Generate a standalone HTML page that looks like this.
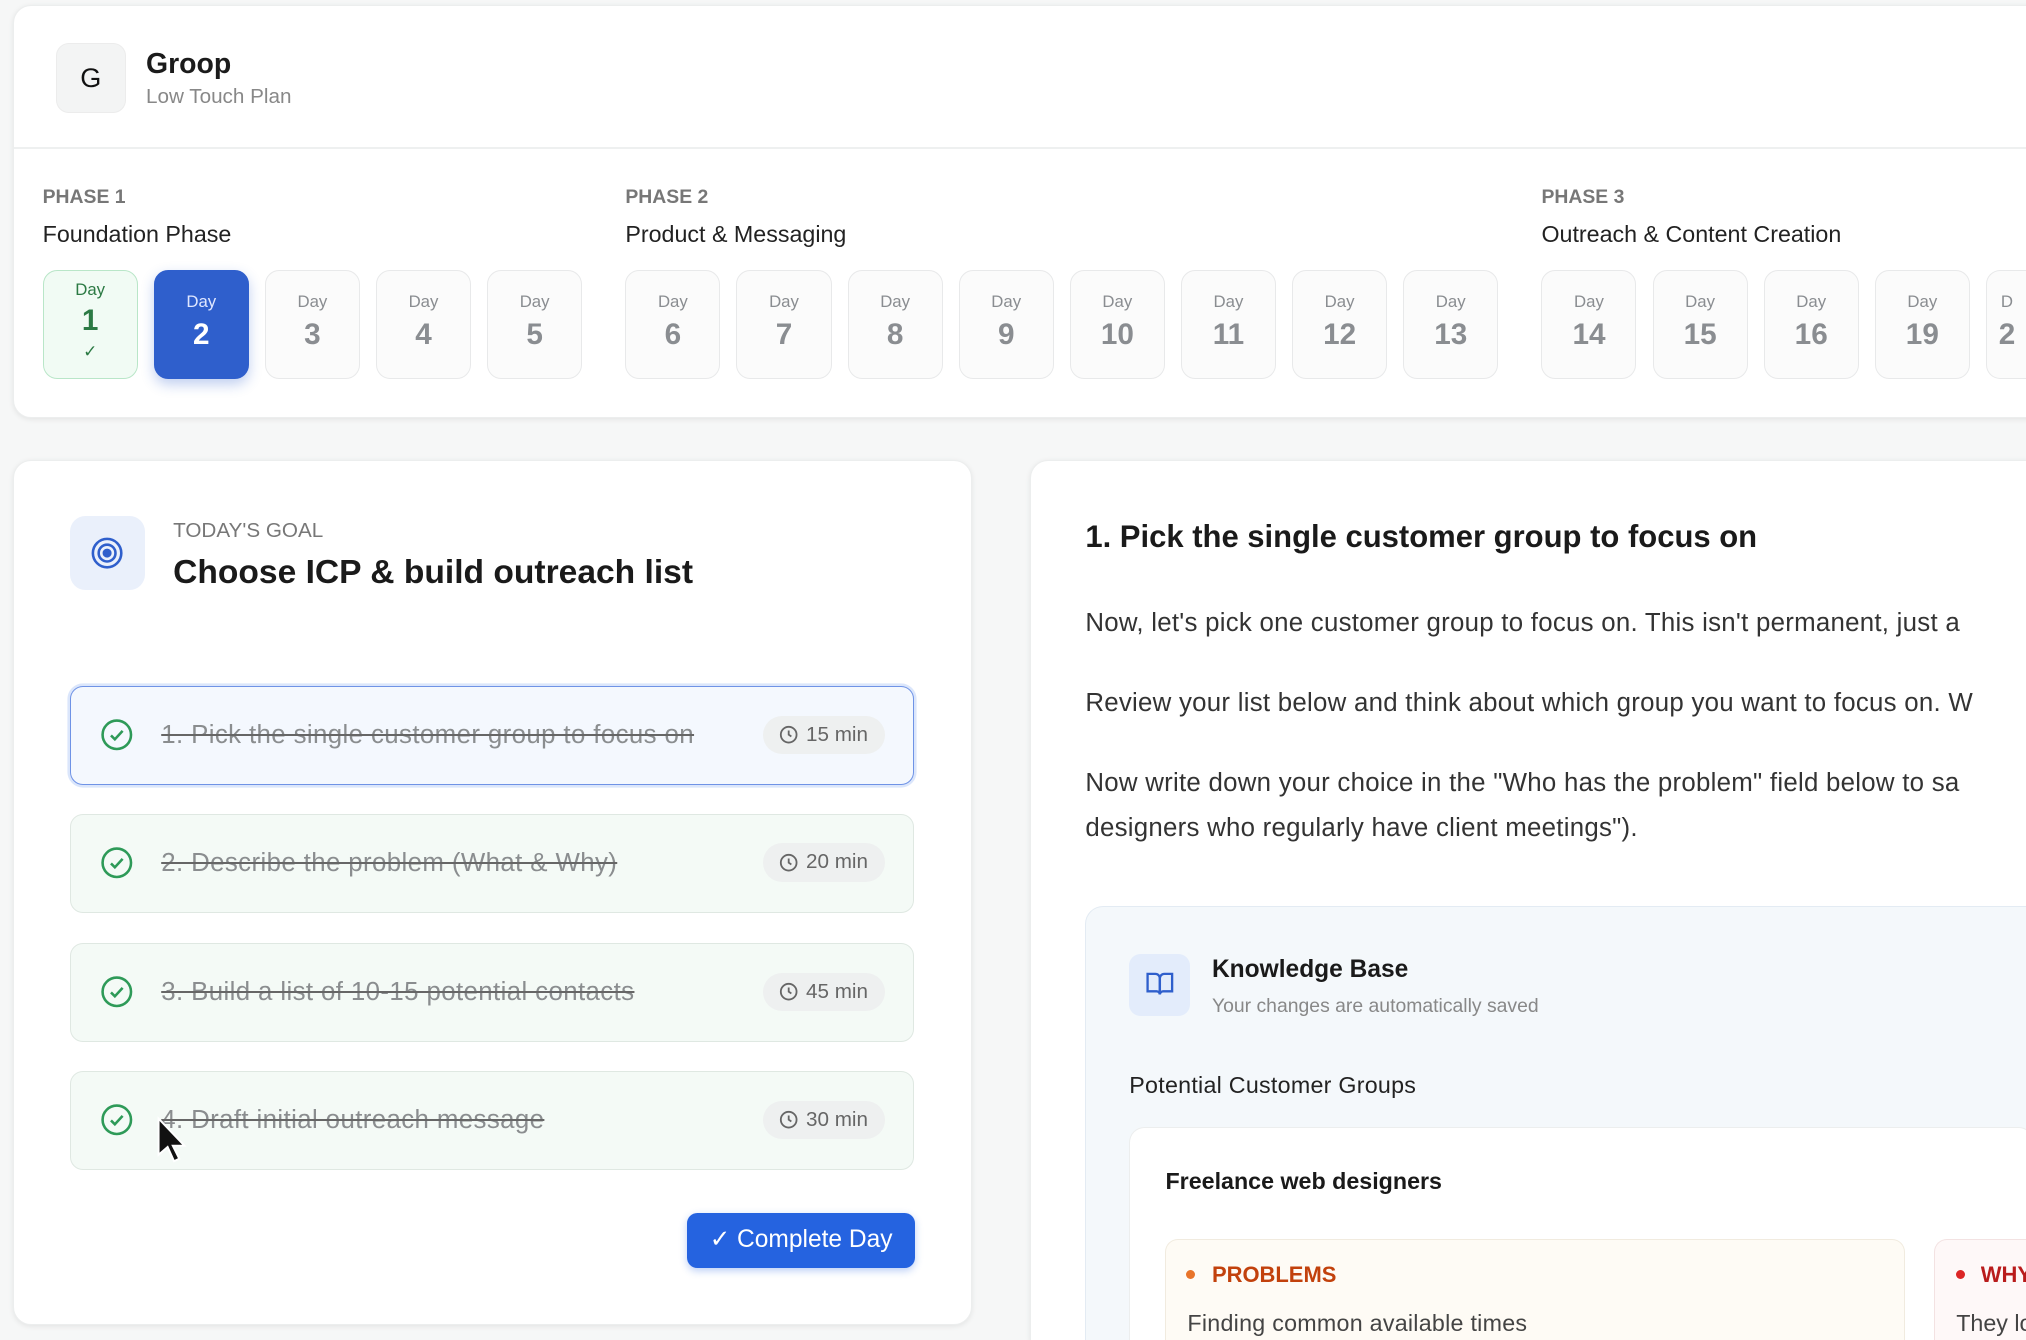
<!DOCTYPE html>
<html><head><meta charset="utf-8"><style>
html,body{margin:0;padding:0;}
html{width:2026px;height:1340px;overflow:hidden;background:#f6f7f7;}
body{zoom:1.29209;width:1568px;height:1037px;position:relative;font-family:"Liberation Sans",sans-serif;color:#111;overflow:hidden;}
.abs{position:absolute;}
.card{position:absolute;background:#fff;border-radius:14px;box-shadow:0 1px 4px rgba(0,0,0,.08);border:1px solid #eceeee;}
.day{position:absolute;top:209px;width:72px;height:83px;border:1.5px solid #e8e9ea;border-radius:11px;background:#fbfbfb;text-align:center;color:#8a8d91;}
.day .l{font-size:13px;margin-top:16px;}
.day .n{font-size:23px;font-weight:bold;margin-top:5px;}
.plabel{position:absolute;top:144px;font-size:15px;font-weight:bold;color:#777;}
.pname{position:absolute;top:171px;font-size:18px;color:#222;}
.task{position:absolute;left:54px;width:652px;height:75px;border:1.5px solid #dfe8e2;border-radius:10px;background:#f4faf6;}
.task .chk{position:absolute;left:23px;top:24px;}
.task .t{position:absolute;left:70px;top:26px;font-size:20px;color:#8a8d8f;text-decoration:line-through;text-decoration-color:#666;letter-spacing:0.3px;}
.task .tm{position:absolute;right:22px;top:22px;height:30px;padding:0 13px 0 12px;background:#eef0f0;border-radius:15px;font-size:16px;color:#666;line-height:30px;display:flex;align-items:center;gap:6px;}
p.b{position:absolute;left:840px;margin:0;font-size:20px;color:#333;line-height:35px;white-space:nowrap;letter-spacing:0.2px;}
</style></head><body>

<div class="card" style="left:10px;top:4px;width:1600px;height:318px;"></div>
<div class="abs" style="left:11px;top:114px;width:1557px;height:1px;background:#eef0f0"></div>
<div class="abs" style="left:43px;top:33px;width:53px;height:53px;border-radius:10px;background:#f3f4f4;border:1px solid #ececec;text-align:center;line-height:53px;font-size:21px;">G</div>
<div class="abs" style="left:113px;top:37px;font-size:22px;font-weight:bold;color:#1b1b1b">Groop</div>
<div class="abs" style="left:113px;top:66px;font-size:16px;color:#888">Low Touch Plan</div>

<div class="plabel" style="left:33px">PHASE 1</div><div class="pname" style="left:33px">Foundation Phase</div>
<div class="plabel" style="left:484px">PHASE 2</div><div class="pname" style="left:484px">Product &amp; Messaging</div>
<div class="plabel" style="left:1193px">PHASE 3</div><div class="pname" style="left:1193px">Outreach &amp; Content Creation</div>

<div class="day" style="left:33px;border-color:#b9e6c8;background:#f1fbf4;color:#2c7a44"><div class="l" style="margin-top:7px">Day</div><div class="n" style="margin-top:3px">1</div><div style="font-size:13px;margin-top:2px">✓</div></div>
<div class="day" style="left:119px;background:#2f5fcc;border-color:#2f5fcc;color:#fff;box-shadow:0 4px 10px rgba(47,95,204,.3)"><div class="l" style="color:#dfe7ff">Day</div><div class="n">2</div></div>
<div class="day" style="left:205px"><div class="l">Day</div><div class="n">3</div></div>
<div class="day" style="left:291px"><div class="l">Day</div><div class="n">4</div></div>
<div class="day" style="left:377px"><div class="l">Day</div><div class="n">5</div></div>
<div class="day" style="left:484px"><div class="l">Day</div><div class="n">6</div></div>
<div class="day" style="left:570px"><div class="l">Day</div><div class="n">7</div></div>
<div class="day" style="left:656px"><div class="l">Day</div><div class="n">8</div></div>
<div class="day" style="left:742px"><div class="l">Day</div><div class="n">9</div></div>
<div class="day" style="left:828px"><div class="l">Day</div><div class="n">10</div></div>
<div class="day" style="left:914px"><div class="l">Day</div><div class="n">11</div></div>
<div class="day" style="left:1000px"><div class="l">Day</div><div class="n">12</div></div>
<div class="day" style="left:1086px"><div class="l">Day</div><div class="n">13</div></div>
<div class="day" style="left:1193px"><div class="l">Day</div><div class="n">14</div></div>
<div class="day" style="left:1279px"><div class="l">Day</div><div class="n">15</div></div>
<div class="day" style="left:1365px"><div class="l">Day</div><div class="n">16</div></div>
<div class="day" style="left:1451px"><div class="l">Day</div><div class="n">19</div></div>
<div class="day" style="left:1537px;width:31px;border-right:none;border-radius:11px 0 0 11px"><div class="l">D</div><div class="n">2</div></div>

<!-- left card -->
<div class="card" style="left:10px;top:356px;width:741px;height:668px;"></div>
<div class="abs" style="left:54px;top:399px;width:58px;height:58px;border-radius:12px;background:#eaf0fb;"></div>
<svg class="abs" style="left:69px;top:414px" width="28" height="28" viewBox="0 0 28 28" fill="none" stroke="#2f5fcc" stroke-width="2"><circle cx="14" cy="14" r="11"/><circle cx="14" cy="14" r="6.5"/><circle cx="14" cy="14" r="2.5" fill="#2f5fcc"/></svg>
<div class="abs" style="left:134px;top:402px;font-size:16px;color:#777">TODAY'S GOAL</div>
<div class="abs" style="left:134px;top:429px;font-size:26px;font-weight:bold;color:#1a1a1a">Choose ICP &amp; build outreach list</div>

<div class="task" style="top:531px;border-color:#6f93e6;background:#f4f8fe;box-shadow:0 0 0 2px #dbe6fb"><svg class="chk" width="26" height="26" viewBox="0 0 26 26" fill="none" stroke="#2e9a58" stroke-width="2"><circle cx="13" cy="13" r="11"/><path d="M8.5 13.5l3 3 6-6.5"/></svg><div class="t">1. Pick the single customer group to focus on</div><div class="tm"><svg width="15" height="15" viewBox="0 0 16 16" fill="none" stroke="#666" stroke-width="1.5"><circle cx="8" cy="8" r="6.5"/><path d="M8 4.5V8l2.2 1.5"/></svg>15 min</div></div>
<div class="task" style="top:630px"><svg class="chk" width="26" height="26" viewBox="0 0 26 26" fill="none" stroke="#2e9a58" stroke-width="2"><circle cx="13" cy="13" r="11"/><path d="M8.5 13.5l3 3 6-6.5"/></svg><div class="t">2. Describe the problem (What &amp; Why)</div><div class="tm"><svg width="15" height="15" viewBox="0 0 16 16" fill="none" stroke="#666" stroke-width="1.5"><circle cx="8" cy="8" r="6.5"/><path d="M8 4.5V8l2.2 1.5"/></svg>20 min</div></div>
<div class="task" style="top:730px"><svg class="chk" width="26" height="26" viewBox="0 0 26 26" fill="none" stroke="#2e9a58" stroke-width="2"><circle cx="13" cy="13" r="11"/><path d="M8.5 13.5l3 3 6-6.5"/></svg><div class="t">3. Build a list of 10-15 potential contacts</div><div class="tm"><svg width="15" height="15" viewBox="0 0 16 16" fill="none" stroke="#666" stroke-width="1.5"><circle cx="8" cy="8" r="6.5"/><path d="M8 4.5V8l2.2 1.5"/></svg>45 min</div></div>
<div class="task" style="top:829px"><svg class="chk" width="26" height="26" viewBox="0 0 26 26" fill="none" stroke="#2e9a58" stroke-width="2"><circle cx="13" cy="13" r="11"/><path d="M8.5 13.5l3 3 6-6.5"/></svg><div class="t">4. Draft initial outreach message</div><div class="tm"><svg width="15" height="15" viewBox="0 0 16 16" fill="none" stroke="#666" stroke-width="1.5"><circle cx="8" cy="8" r="6.5"/><path d="M8 4.5V8l2.2 1.5"/></svg>30 min</div></div>
<svg class="abs" style="left:121px;top:864px" width="24" height="38" viewBox="0 0 24 38"><path d="M2 2v28l7-6 5 11 4-2-5-10h9z" fill="#111" stroke="#fff" stroke-width="1.5"/></svg>

<div class="abs" style="left:532px;top:939px;width:176px;height:42px;border-radius:8px;background:#2563e0;color:#fff;font-size:19px;text-align:center;line-height:42px;box-shadow:0 2px 6px rgba(37,99,224,.3)">✓ Complete Day</div>

<!-- right card -->
<div class="card" style="left:797px;top:356px;width:800px;height:681px;border-bottom:none;border-radius:14px 14px 0 0"></div>
<div class="abs" style="left:840px;top:402px;font-size:24px;font-weight:bold;color:#1a1a1a">1. Pick the single customer group to focus on</div>
<p class="b" style="top:465px">Now, let's pick one customer group to focus on. This isn't permanent, just a</p>
<p class="b" style="top:527px">Review your list below and think about which group you want to focus on. W</p>
<p class="b" style="top:589px">Now write down your choice in the "Who has the problem" field below to sa<br>designers who regularly have client meetings").</p>

<div class="abs" style="left:840px;top:701px;width:760px;height:336px;border:1px solid #e3ebf3;border-bottom:none;border-radius:14px 14px 0 0;background:#f4f8fb;box-sizing:border-box"></div>
<div class="abs" style="left:874px;top:738px;width:47px;height:48px;border-radius:9px;background:#e3ecfb"></div>
<svg class="abs" style="left:886px;top:751px" width="23" height="22" viewBox="0 0 23 22" fill="none" stroke="#2f5fcc" stroke-width="1.8"><path d="M2 3h6a3.5 3.5 0 0 1 3.5 3.5V19a2.5 2.5 0 0 0-2.5-2.5H2z"/><path d="M21 3h-6a3.5 3.5 0 0 0-3.5 3.5V19a2.5 2.5 0 0 1 2.5-2.5H21z"/></svg>
<div class="abs" style="left:938px;top:740px;font-size:19px;font-weight:bold;color:#1a1a1a">Knowledge Base</div>
<div class="abs" style="left:938px;top:770px;font-size:15px;color:#888">Your changes are automatically saved</div>
<div class="abs" style="left:874px;top:830px;font-size:18px;color:#222;letter-spacing:0.2px">Potential Customer Groups</div>
<div class="abs" style="left:874px;top:872px;width:700px;height:165px;border:1px solid #eceeee;border-bottom:none;border-radius:12px 12px 0 0;background:#fff;box-sizing:border-box"></div>
<div class="abs" style="left:902px;top:904px;font-size:18px;font-weight:bold;color:#1a1a1a">Freelance web designers</div>
<div class="abs" style="left:902px;top:959px;width:572px;height:78px;border:1px solid #f1ebdf;border-bottom:none;border-radius:10px 10px 0 0;background:#fefbf5;box-sizing:border-box"></div>
<div class="abs" style="left:918px;top:983px;width:7px;height:7px;border-radius:50%;background:#e8742a"></div>
<div class="abs" style="left:938px;top:977px;font-size:17px;color:#c2410c;font-weight:bold">PROBLEMS</div>
<div class="abs" style="left:919px;top:1014px;font-size:18px;color:#444;letter-spacing:0.2px">Finding common available times</div>
<div class="abs" style="left:1497px;top:959px;width:71px;height:78px;border:1px solid #f3e2e2;border-right:none;border-bottom:none;border-radius:10px 0 0 0;background:#fef8f8;box-sizing:border-box"></div>
<div class="abs" style="left:1514px;top:983px;width:7px;height:7px;border-radius:50%;background:#dc2626"></div>
<div class="abs" style="left:1533px;top:977px;font-size:17px;color:#b91c1c;font-weight:bold;width:35px;overflow:hidden;white-space:nowrap">WHY</div>
<div class="abs" style="left:1514px;top:1014px;font-size:18px;color:#444;width:54px;overflow:hidden;white-space:nowrap">They lo</div>
</body></html>
